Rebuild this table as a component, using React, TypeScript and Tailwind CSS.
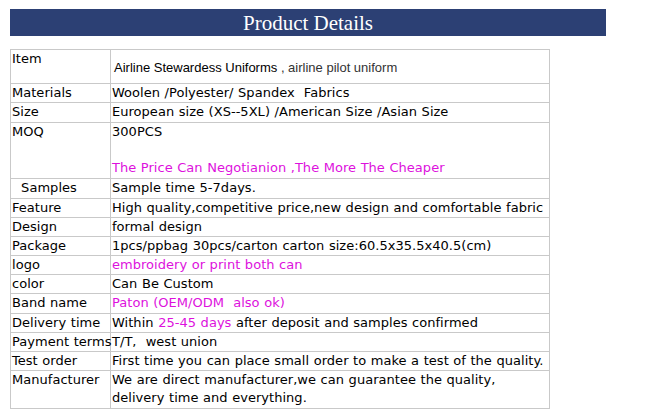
import React from 'react';

type Row = { label: React.ReactNode; value: React.ReactNode; h: string; cls?: string };

const pink = 'text-[#dd11dd]';

const rows: Row[] = [
  {
    label: 'Item',
    h: 'h-[34px]',
    cls: 'pt-[9px] pl-[3px] font-["Liberation_Sans",Arial,sans-serif] tracking-normal [word-spacing:0px]',
    value: (
      <>
        <span className="text-black">Airline Stewardess Uniforms</span>
        <span className="text-[#333]"> , airline pilot uniform</span>
      </>
    ),
  },
  { label: 'Materials', h: 'h-[19px]', value: 'Woolen /Polyester/ Spandex\u00a0 Fabrics' },
  { label: 'Size', h: 'h-[20px]', value: 'European size (XS--5XL) /American Size /Asian Size' },
  {
    label: 'MOQ',
    h: 'h-[56px]',
    value: (
      <>
        300PCS
        <br />
        <br />
        <span className={pink}>The Price Can Negotianion ,The More The Cheaper</span>
      </>
    ),
  },
  { label: '\u00a0\u00a0Samples', h: 'h-[20px]', value: 'Sample time 5-7days.' },
  { label: 'Feature', h: 'h-[19px]', value: 'High quality,competitive price,new design and comfortable fabric' },
  { label: 'Design', h: 'h-[19px]', value: 'formal design' },
  { label: 'Package', h: 'h-[19px]', value: '1pcs/ppbag 30pcs/carton carton size:60.5x35.5x40.5(cm)' },
  { label: 'logo', h: 'h-[19px]', value: <span className={pink}>embroidery or print both can</span> },
  { label: 'color', h: 'h-[19px]', value: 'Can Be Custom' },
  { label: 'Band name', h: 'h-[20px]', value: <span className={pink}>Paton (OEM/ODM{'\u00a0'} also ok)</span> },
  {
    label: 'Delivery time',
    h: 'h-[19px]',
    value: (
      <>
        Within <span className={pink}>25-45 days</span> after deposit and samples confirmed
      </>
    ),
  },
  { label: 'Payment terms', h: 'h-[19px]', value: 'T/T,\u00a0 west union' },
  { label: 'Test order', h: 'h-[19px]', value: 'First time you can place small order to make a test of the quality.' },
  {
    label: 'Manufacturer',
    h: 'h-[37px]',
    value: (
      <>
        We are direct manufacturer,we can guarantee the quality,
        <br />
        delivery time and everything.
      </>
    ),
  },
];

export default function App() {
  return (
    <div className="min-h-screen bg-white pl-[10px] pt-[9px]">
      {/* Heading bar */}
      <div className="flex h-[27px] w-[596px] items-center justify-center bg-[#2c4074]">
        <h2 className='font-["Liberation_Serif","Times_New_Roman",serif] text-[21px] leading-[26px] text-white'>
          Product Details
        </h2>
      </div>

      {/* Details table */}
      <div className='mt-[13px] w-[540px] border border-[#c9c9c9] font-["DejaVu_Sans",Verdana,sans-serif] text-[13px] leading-[18px] tracking-[0.03px] text-black [word-spacing:0.4px]'>
        {rows.map((r, i) => (
          <div
            key={i}
            className={`flex ${r.h} ${i < rows.length - 1 ? 'border-b border-[#c9c9c9]' : ''}`}
          >
            <div className="w-[100px] shrink-0 whitespace-nowrap border-r border-[#c9c9c9] pl-px">{r.label}</div>
            <div className={`flex-1 whitespace-nowrap ${r.cls ?? 'pl-px'}`}>{r.value}</div>
          </div>
        ))}
      </div>
    </div>
  );
}
